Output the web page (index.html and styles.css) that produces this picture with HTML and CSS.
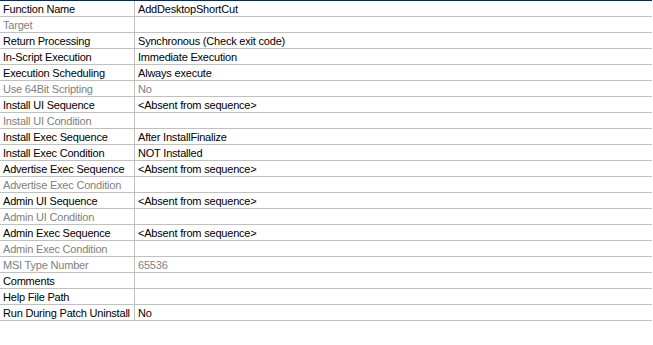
FILE: index.html
```html
<!DOCTYPE html>
<html>
<head>
<meta charset="utf-8">
<link rel="stylesheet" href="styles.css">
</head>
<body>
<div class="grid">
  <div class="row"><div class="name">Function Name</div><div class="val">AddDesktopShortCut</div></div>
  <div class="row dim"><div class="name">Target</div><div class="val"></div></div>
  <div class="row"><div class="name">Return Processing</div><div class="val">Synchronous (Check exit code)</div></div>
  <div class="row"><div class="name">In-Script Execution</div><div class="val">Immediate Execution</div></div>
  <div class="row"><div class="name">Execution Scheduling</div><div class="val">Always execute</div></div>
  <div class="row dim"><div class="name">Use 64Bit Scripting</div><div class="val">No</div></div>
  <div class="row"><div class="name">Install UI Sequence</div><div class="val">&lt;Absent from sequence&gt;</div></div>
  <div class="row dim"><div class="name">Install UI Condition</div><div class="val"></div></div>
  <div class="row"><div class="name">Install Exec Sequence</div><div class="val">After InstallFinalize</div></div>
  <div class="row"><div class="name">Install Exec Condition</div><div class="val">NOT Installed</div></div>
  <div class="row"><div class="name">Advertise Exec Sequence</div><div class="val">&lt;Absent from sequence&gt;</div></div>
  <div class="row dim"><div class="name">Advertise Exec Condition</div><div class="val"></div></div>
  <div class="row"><div class="name">Admin UI Sequence</div><div class="val">&lt;Absent from sequence&gt;</div></div>
  <div class="row dim"><div class="name">Admin UI Condition</div><div class="val"></div></div>
  <div class="row"><div class="name">Admin Exec Sequence</div><div class="val">&lt;Absent from sequence&gt;</div></div>
  <div class="row dim"><div class="name">Admin Exec Condition</div><div class="val"></div></div>
  <div class="row dim"><div class="name">MSI Type Number</div><div class="val">65536</div></div>
  <div class="row"><div class="name">Comments</div><div class="val"></div></div>
  <div class="row"><div class="name">Help File Path</div><div class="val"></div></div>
  <div class="row"><div class="name">Run During Patch Uninstall</div><div class="val">No</div></div>
</div>
</body>
</html>
```
FILE: styles.css
```css
html, body {
  margin: 0;
  padding: 0;
  background: #ffffff;
}
body {
  font-family: "Liberation Sans", Arial, sans-serif;
  font-size: 11px;
  letter-spacing: -0.2px;
  color: #000000;
}
.grid {
  width: 652px;
  border-top: 1px solid #0b2a55;
  box-sizing: border-box;
}
.row {
  display: grid;
  grid-template-columns: 135px 1fr;
  height: 16px;
  box-sizing: border-box;
  border-bottom: 1px solid #c0c0c0;
}
.name {
  border-right: 1px solid #c0c0c0;
  padding-left: 3px;
  padding-top: 1px;
  line-height: 14px;
  white-space: nowrap;
  overflow: hidden;
}
.val {
  padding-left: 3px;
  padding-top: 1px;
  line-height: 14px;
  white-space: nowrap;
}
.dim .name, .dim .val {
  color: #808080;
}
```
